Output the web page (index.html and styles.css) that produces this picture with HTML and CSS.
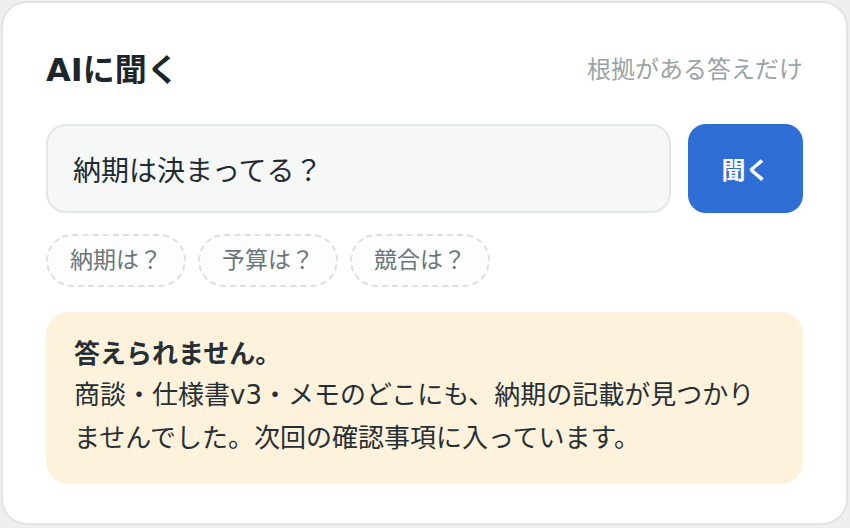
FILE: index.html
```html
<!DOCTYPE html>
<html lang="ja">
<head>
<meta charset="utf-8">
<title>AIに聞く</title>
<link rel="stylesheet" href="styles.css">
</head>
<body>
<div class="card">
  <div class="header">
    <h1 class="title">AIに聞く</h1>
    <span class="subtitle">根拠がある答えだけ</span>
  </div>
  <div class="ask-row">
    <div class="query">納期は決まってる？</div>
    <button class="ask-btn">聞く</button>
  </div>
  <div class="chips">
    <span class="chip">納期は？</span>
    <span class="chip">予算は？</span>
    <span class="chip">競合は？</span>
  </div>
  <div class="answer">
    <div class="answer-title">答えられません。</div>
    <div class="answer-body">商談・仕様書v3・メモのどこにも、納期の記載が見つかりませんでした。次回の確認事項に入っています。</div>
  </div>
</div>
</body>
</html>
```
FILE: styles.css
```css
* { box-sizing: border-box; }
html, body { margin: 0; padding: 0; }
body {
  background: #efefef;
  padding: 1px 2px 0 1px;
  font-family: "DejaVu Sans", "Noto Sans CJK JP", sans-serif;
  color: #263034;
}
.card {
  background: #ffffff;
  border: 2px solid #e2e4e4;
  border-radius: 26px;
  height: 524px;
  padding: 45px 43px 38px 43px;
}
.header {
  display: flex;
  justify-content: space-between;
  align-items: center;
  height: 45px;
}
.title {
  margin: 0;
  font-size: 32px;
  font-weight: 700;
  line-height: 45px;
  color: #1d272b;
}
.subtitle {
  font-size: 24px;
  line-height: 45px;
  color: #9aa3a6;
}
.ask-row {
  display: flex;
  gap: 17px;
  margin-top: 31px;
  height: 89px;
}
.query {
  flex: 1;
  display: flex;
  align-items: center;
  background: #f6f8f8;
  border: 2px solid #e2e6e7;
  border-radius: 20px;
  padding: 0 25px;
  font-size: 28px;
  color: #222b2f;
}
.ask-btn {
  width: 115px;
  border: none;
  border-radius: 18px;
  background: #2f6fd5;
  color: #ffffff;
  font-family: inherit;
  font-size: 24px;
  font-weight: 700;
  padding: 0;
}
.chips {
  display: flex;
  gap: 12px;
  margin-top: 21px;
}
.chip {
  display: inline-block;
  border: 2px dashed #dde0e1;
  border-radius: 27px;
  padding: 9px 22px;
  font-size: 23px;
  line-height: 31px;
  color: #6b767a;
  background: #fdfdfd;
}
.answer {
  margin-top: 25px;
  background: #fef2dc;
  border-radius: 22px;
  padding: 23px 28px 24px 28px;
  font-size: 26px;
  color: #263034;
}
.answer-title {
  font-weight: 700;
  line-height: 39px;
}
.answer-body {
  line-height: 43px;
}
```
